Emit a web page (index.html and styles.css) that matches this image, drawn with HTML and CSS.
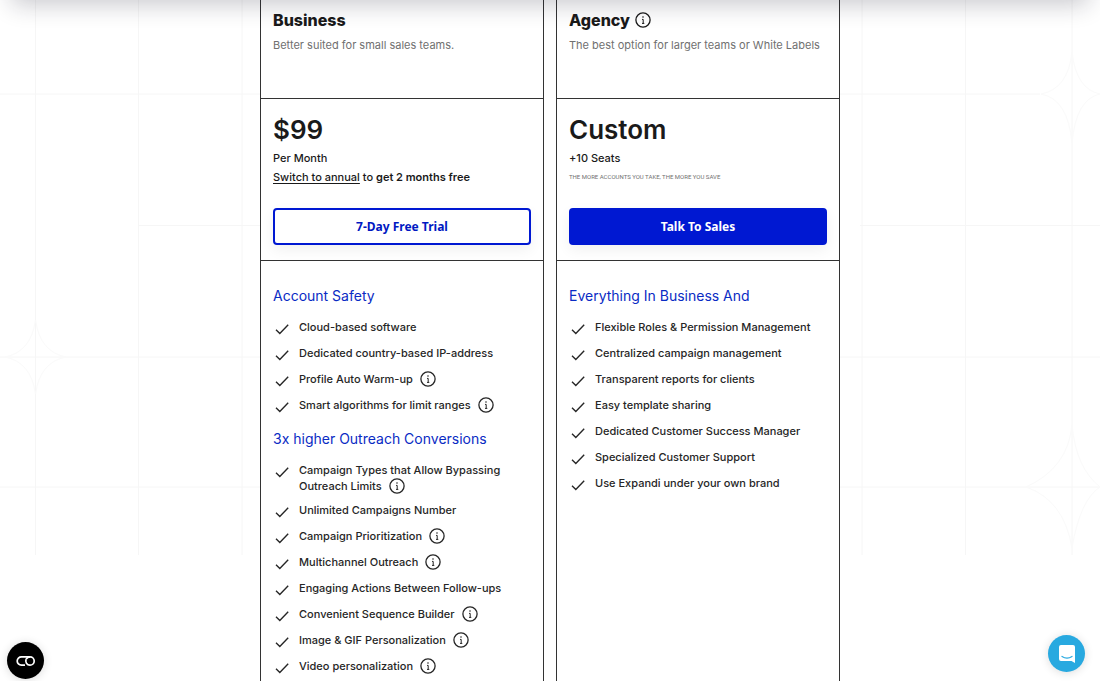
FILE: index.html
```html
<!DOCTYPE html>
<html lang="en">
<head>
  <meta charset="UTF-8">
  <meta name="viewport" content="width=device-width, initial-scale=1.0">
  <title>Pricing</title>
  <link rel="stylesheet" href="styles.css">
</head>
<body>
  <!-- shared icons -->
  <svg class="sprite" aria-hidden="true">
    <symbol id="check" viewBox="0 0 14 12">
      <path d="M1 6.8 L4.8 10.4 L13.2 1.8" fill="none" stroke="currentColor" stroke-width="1.4"/>
    </symbol>
    <symbol id="info" viewBox="0 0 16 16">
      <circle cx="8" cy="8" r="7.1" fill="none" stroke="currentColor" stroke-width="1.3"/>
      <circle cx="8" cy="5" r="0.8" fill="currentColor"/>
      <path d="M7 7.4 H8.2 V11.4 M7 11.4 H9.3" fill="none" stroke="currentColor" stroke-width="1"/>
    </symbol>
  </svg>

  <header class="site-header"></header>

  <svg class="grid-lines grid-left" viewBox="0 0 260 555" aria-hidden="true">
    <path d="M35.5 0V555 M138.5 0V555 M242 0V555 M0 94H260 M138 225.5H260 M0 357H260 M0 487H260"/>
    <path class="star" d="M35.5 320Q40 352 66 357Q40 362 35.5 394Q31 362 5 357Q31 352 35.5 320Z"/>
  </svg>
  <svg class="grid-lines grid-right" viewBox="0 0 260 555" aria-hidden="true">
    <path d="M22 0V555 M125.5 0V555 M232 0V555 M0 94H200 M20 225.5H260 M0 357H260 M0 487H260"/>
    <path class="star" d="M232 52Q236 89 260 94Q236 99 232 143Q228 99 201 94Q228 89 232 52Z"/>
    <path class="star" d="M232 425Q236 468 260 487Q240 500 232 548Q224 500 186 487Q228 468 232 425Z"/>
  </svg>

  <main class="plans">
    <section class="plan">
      <div class="plan-head">
        <h2>Business</h2>
        <p>Better suited for small sales teams.</p>
      </div>
      <div class="plan-price">
        <div class="price">$99</div>
        <p>Per Month</p>
        <p><a href="#">Switch to annual</a> to <strong>get 2 months free</strong></p>
        <button type="button" class="btn btn-outline">7-Day Free Trial</button>
      </div>
      <div class="plan-features">
        <h3>Account Safety</h3>
        <ul>
          <li><svg class="check"><use href="#check"/></svg><span>Cloud-based software</span></li>
          <li><svg class="check"><use href="#check"/></svg><span>Dedicated country-based IP-address</span></li>
          <li><svg class="check"><use href="#check"/></svg><span>Profile Auto Warm-up <svg class="info"><use href="#info"/></svg></span></li>
          <li><svg class="check"><use href="#check"/></svg><span>Smart algorithms for limit ranges <svg class="info"><use href="#info"/></svg></span></li>
        </ul>
        <h3>3x higher Outreach Conversions</h3>
        <ul>
          <li><svg class="check"><use href="#check"/></svg><span>Campaign Types that Allow Bypassing Outreach Limits <svg class="info"><use href="#info"/></svg></span></li>
          <li><svg class="check"><use href="#check"/></svg><span>Unlimited Campaigns Number</span></li>
          <li><svg class="check"><use href="#check"/></svg><span>Campaign Prioritization <svg class="info"><use href="#info"/></svg></span></li>
          <li><svg class="check"><use href="#check"/></svg><span>Multichannel Outreach <svg class="info"><use href="#info"/></svg></span></li>
          <li><svg class="check"><use href="#check"/></svg><span>Engaging Actions Between Follow-ups</span></li>
          <li><svg class="check"><use href="#check"/></svg><span>Convenient Sequence Builder <svg class="info"><use href="#info"/></svg></span></li>
          <li><svg class="check"><use href="#check"/></svg><span>Image &amp; GIF Personalization <svg class="info"><use href="#info"/></svg></span></li>
          <li><svg class="check"><use href="#check"/></svg><span>Video personalization <svg class="info"><use href="#info"/></svg></span></li>
        </ul>
      </div>
    </section>

    <section class="plan">
      <div class="plan-head">
        <h2>Agency <svg class="info"><use href="#info"/></svg></h2>
        <p>The best option for larger teams or White Labels</p>
      </div>
      <div class="plan-price">
        <div class="price">Custom</div>
        <p>+10 Seats</p>
        <p class="note">The more accounts you take, the more you save</p>
        <button type="button" class="btn btn-solid">Talk To Sales</button>
      </div>
      <div class="plan-features">
        <h3>Everything In Business And</h3>
        <ul>
          <li><svg class="check"><use href="#check"/></svg><span>Flexible Roles &amp; Permission Management</span></li>
          <li><svg class="check"><use href="#check"/></svg><span>Centralized campaign management</span></li>
          <li><svg class="check"><use href="#check"/></svg><span>Transparent reports for clients</span></li>
          <li><svg class="check"><use href="#check"/></svg><span>Easy template sharing</span></li>
          <li><svg class="check"><use href="#check"/></svg><span>Dedicated Customer Success Manager</span></li>
          <li><svg class="check"><use href="#check"/></svg><span>Specialized Customer Support</span></li>
          <li><svg class="check"><use href="#check"/></svg><span>Use Expandi under your own brand</span></li>
        </ul>
      </div>
    </section>
  </main>

  <button type="button" class="fab fab-cookie" aria-label="Cookie settings">
    <svg width="20" height="12" viewBox="0 0 20 12" fill="none" stroke="#fff" stroke-width="1.7">
      <path d="M9 10.2H5.4a4.2 4.2 0 0 1 0 -8.4H14"/>
      <path d="M14 1.8a4.2 4.2 0 0 1 0 8.4a4.2 4.2 0 0 1 -3.8 -6"/>
      <path d="M10.2 4.2Q11.2 2 14 1.8"/>
    </svg>
  </button>
  <button type="button" class="fab fab-chat" aria-label="Open chat">
    <svg width="18" height="20" viewBox="0 0 18 20">
      <path d="M3 1H15Q17 1 17 3V19L13.5 17H3Q1 17 1 15V3Q1 1 3 1Z" fill="#fff"/>
      <path d="M4 12.4Q9 15.8 14 12.4" fill="none" stroke="#28a9e0" stroke-width="1.2" stroke-linecap="round"/>
    </svg>
  </button>
</body>
</html>
```
FILE: styles.css
```css
* {
  box-sizing: border-box;
}

body {
  margin: 0;
  height: 100vh;
  overflow: hidden;
  position: relative;
  background: #fff;
  color: #1a1a1a;
  font-family: Inter, "Liberation Sans", sans-serif;
  font-size: 11px;
  line-height: 16px;
}

h2, h3, p, ul {
  margin: 0;
  padding: 0;
}

.sprite {
  position: absolute;
  width: 0;
  height: 0;
}

/* sits just above the fold, only its shadow shows */
.site-header {
  position: fixed;
  top: -60px;
  left: 12px;
  right: 12px;
  height: 60px;
  box-shadow: 0 4px 24px rgba(20, 20, 40, 0.24);
  z-index: 2;
}

.grid-lines {
  position: absolute;
  top: 0;
  width: 260px;
  height: 555px;
  fill: none;
  stroke: #f6f6f6;
}

.grid-lines .star {
  stroke: #fafafa;
}

.grid-left {
  left: 0;
}

.grid-right {
  right: 0;
}

.plans {
  position: relative;
  display: grid;
  grid-template-columns: 1fr 1fr;
  gap: 12px;
  max-width: 580px;
  min-height: 100%;
  margin: 0 auto;
}

.plan {
  background: #fff;
  border: 1px solid #333;
  border-width: 0 1px;
}

.plan-head {
  min-height: 99px;
  padding: 8px 12px;
  border-bottom: 1px solid #333;
}

.plan-head h2 {
  display: flex;
  align-items: center;
  gap: 5px;
  font-size: 16px;
  line-height: 24px;
  font-weight: 800;
}

.plan-head p {
  margin-top: 5px;
  color: #707070;
}

.plan-price {
  padding: 15px 12px;
  border-bottom: 1px solid #333;
}

.price {
  margin-bottom: 4px;
  font-size: 26px;
  line-height: 32px;
  font-weight: 600;
}

.plan-price p {
  margin-bottom: 3px;
  font-weight: 500;
}

.plan-price a {
  color: inherit;
  text-underline-offset: 2px;
}

.plan-price strong {
  font-weight: 600;
}

.plan-price .note {
  color: #707070;
  font-family: Roboto, sans-serif;
  font-size: 6px;
  font-weight: 400;
  text-transform: uppercase;
}

.btn {
  display: block;
  width: 100%;
  height: 37px;
  margin-top: 23px;
  border: 2px solid #0018d2;
  border-radius: 4px;
  box-shadow: 0 5px 14px rgba(0, 0, 0, 0.06);
  font-family: "Noto Sans", sans-serif;
  font-size: 12px;
  font-weight: 700;
  cursor: pointer;
}

.btn-outline {
  background: #fff;
  color: #0018c2;
}

.btn-solid {
  background: #0018d2;
  color: #fff;
}

.plan-features {
  padding: 25px 12px;
}

.plan-features h3 {
  margin-bottom: 10px;
  color: #0a2bc4;
  font-size: 14px;
  line-height: 20px;
  font-weight: 400;
}

.plan-features ul {
  margin-bottom: 11px;
  list-style: none;
}

.plan-features li {
  display: flex;
  align-items: flex-start;
  gap: 10px;
  min-height: 24px;
  margin-bottom: 2px;
  padding: 3px 0 3px 2px;
  color: #262626;
  font-weight: 500;
}

.check {
  flex: none;
  width: 14px;
  height: 12px;
  margin-top: 4px;
}

.info {
  width: 16px;
  height: 16px;
}

.plan-features .info {
  margin-left: 4px;
  vertical-align: top;
}

.fab {
  position: fixed;
  display: flex;
  align-items: center;
  justify-content: center;
  width: 37px;
  height: 37px;
  padding: 0;
  border: 0;
  border-radius: 50%;
  box-shadow: 0 1px 10px rgba(0, 0, 0, 0.14);
  cursor: pointer;
}

.fab-cookie {
  left: 7px;
  bottom: 2px;
  background: #000;
}

.fab-chat {
  right: 15px;
  bottom: 9px;
  background: #28a9e0;
}
```
